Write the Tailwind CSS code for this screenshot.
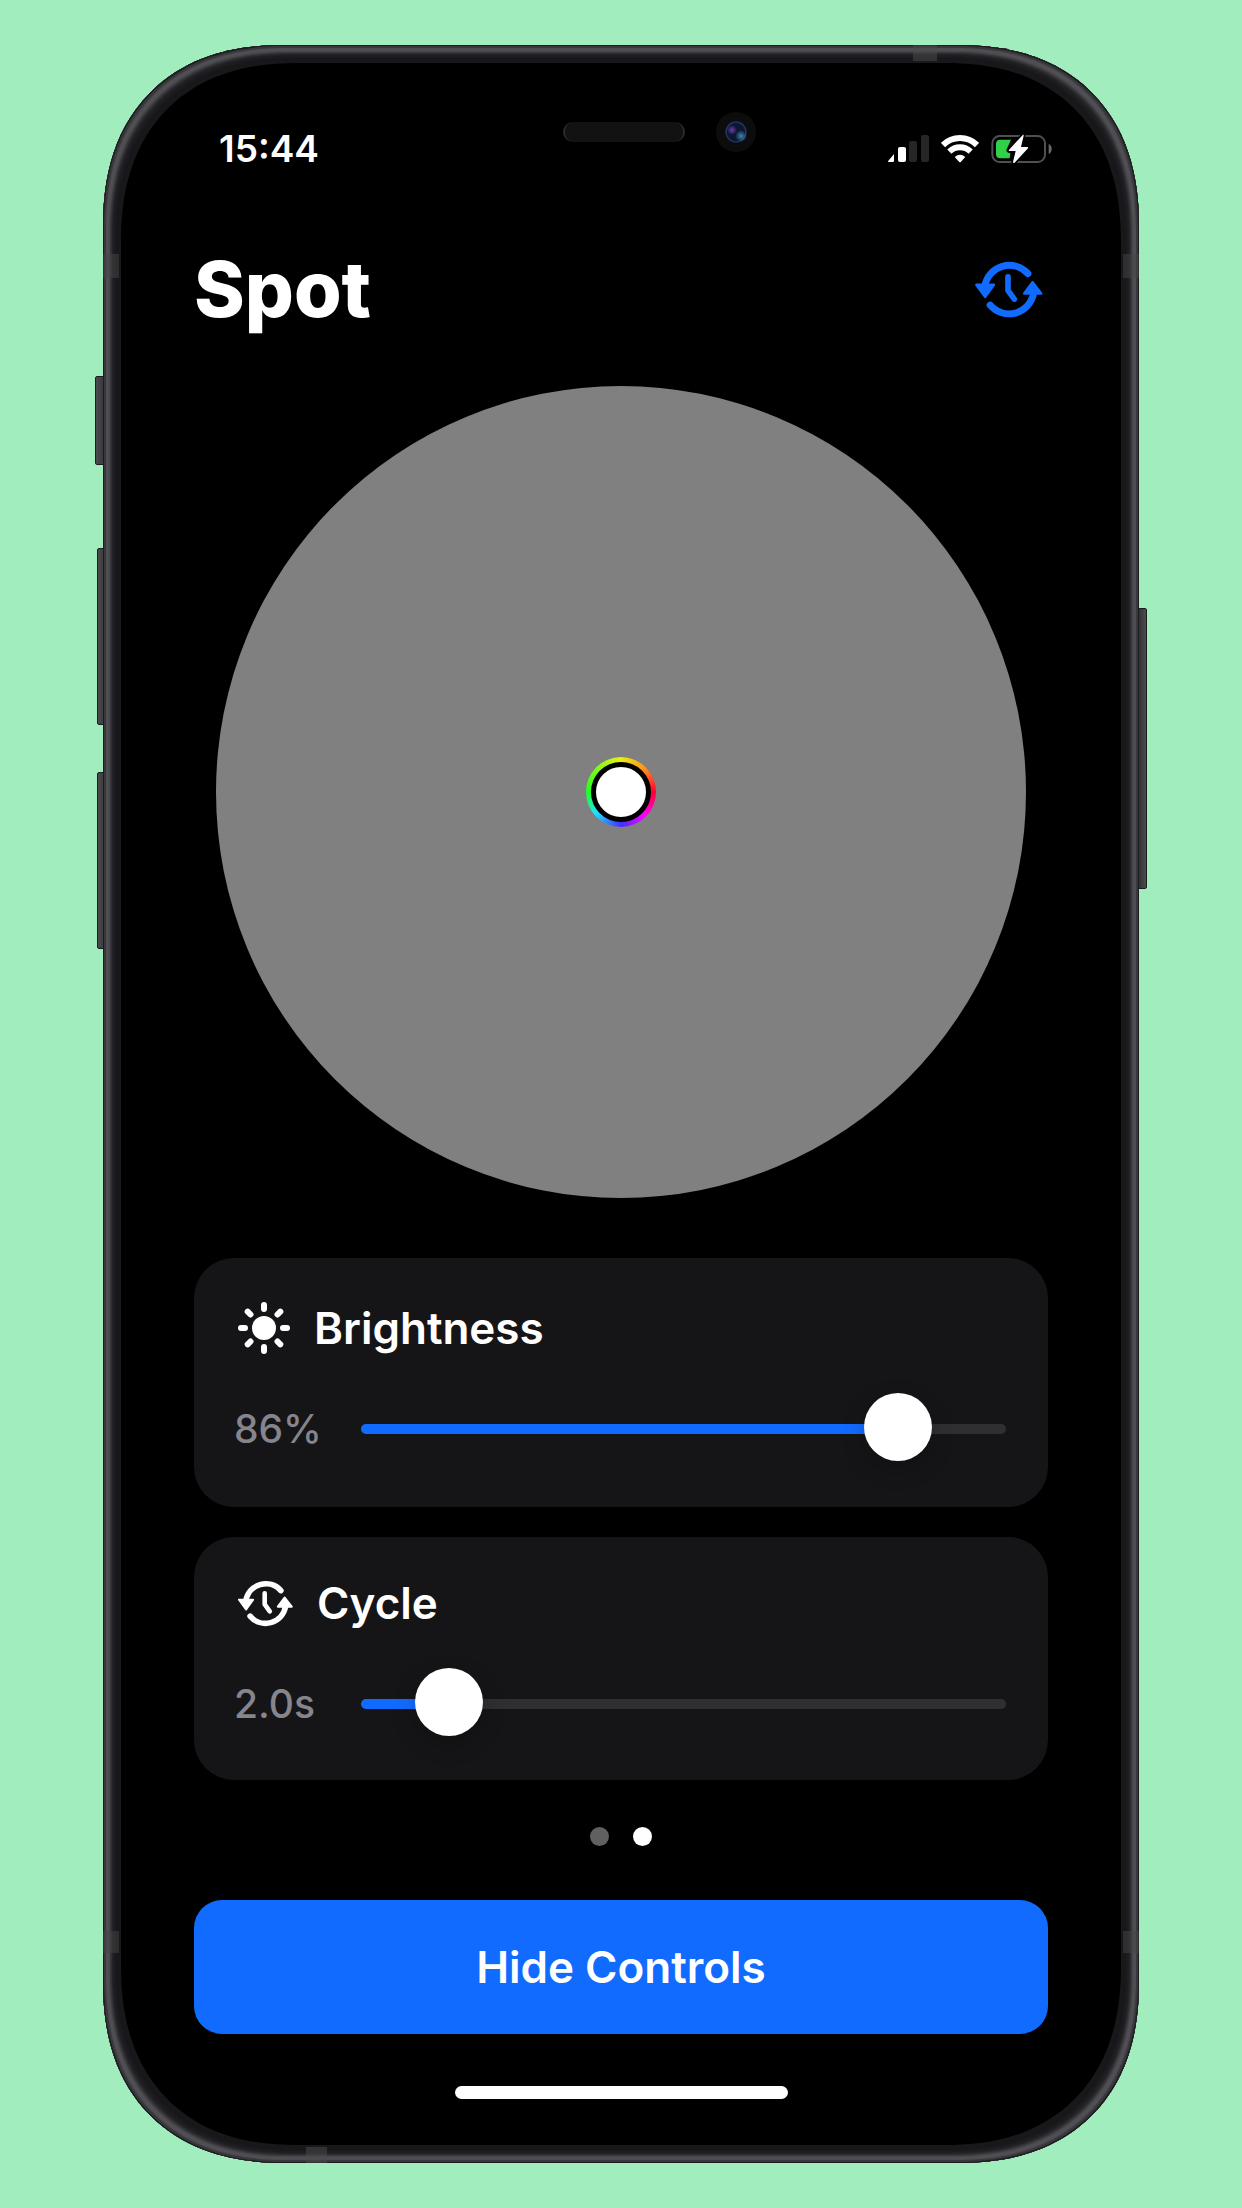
<!DOCTYPE html>
<html lang="en">
<head>
<meta charset="utf-8">
<meta name="viewport" content="width=device-width, initial-scale=1">
<title>Spot</title>
<script src="https://cdn.jsdelivr.net/npm/@tailwindcss/browser@4"></script>
</head>
<body class="min-h-screen bg-[#a2edbd] px-[103px] py-[45px] font-['Inter',sans-serif] text-white">

<svg class="hidden" aria-hidden="true">
  <symbol id="cycle" viewBox="404 512 204 172">
    <g fill="none" stroke="currentColor" stroke-linecap="round" stroke-linejoin="round">
      <path stroke-width="21" d="M563 550A75 75 0 0 0 433 588"/>
      <path stroke-width="21" d="M449 645A75 75 0 0 0 580 610"/>
      <path stroke-width="17" d="M503 560V601L522 627"/>
    </g>
    <g fill="currentColor" stroke="currentColor" stroke-width="8" stroke-linejoin="round">
      <path d="M408 584H460L434 620Z"/>
      <path d="M552 610H603L577 576Z"/>
    </g>
  </symbol>
</svg>

<div class="relative">
  <!-- side buttons -->
  <div class="absolute -left-2 top-[331px] h-[89px] w-3 rounded-xs border border-[#1c1c1f] bg-linear-to-r from-[#4a4a4f] to-[#333338]"></div>
  <div class="absolute -left-1.5 top-[503px] h-[177px] w-3 rounded-xs border border-[#1c1c1f] bg-linear-to-r from-[#4a4a4f] to-[#333338]"></div>
  <div class="absolute -left-1.5 top-[727px] h-[177px] w-3 rounded-xs border border-[#1c1c1f] bg-linear-to-r from-[#4a4a4f] to-[#333338]"></div>
  <div class="absolute -right-2 top-[563px] h-[281px] w-3 rounded-xs border border-[#1c1c1f] bg-linear-to-r from-[#28282b] to-[#4d4d50]"></div>

  <main class="relative overflow-hidden rounded-[182px] bg-black pt-20 pb-16 shadow-[inset_0_0_0_1px_#1c1c1e,inset_0_0_1px_3px_#38373b,inset_0_0_2px_7px_#504f54,inset_0_0_2px_9px_#343337,inset_0_0_3px_12px_#212024,inset_0_0_0_18px_#18181b] [corner-shape:superellipse(1.2)]">
    <!-- antenna bands -->
    <div class="absolute left-0 top-[209px] h-6 w-4 bg-[#454343]/50"></div>
    <div class="absolute right-0 top-[209px] h-6 w-4 bg-[#454343]/50"></div>
    <div class="absolute left-0 bottom-[210px] h-[22px] w-4 bg-[#454343]/50"></div>
    <div class="absolute right-0 bottom-[210px] h-[22px] w-4 bg-[#454343]/50"></div>
    <div class="absolute bottom-0 left-[203px] h-4 w-[21px] bg-[#4c4a4b]/50"></div>
    <div class="absolute top-0 right-[202px] h-4 w-6 bg-[#4c4a4b]/50"></div>

    <!-- speaker and camera -->
    <div class="absolute left-1/2 top-[67px] -ml-[58px] flex items-center gap-[31px]">
      <div class="h-5 w-[122px] rounded-full border-x-2 border-[#2b2b2b] bg-[#121212]"></div>
      <svg class="size-10" viewBox="0 0 40 40" aria-hidden="true">
        <defs>
          <radialGradient id="violet"><stop offset="0" stop-color="#6b3fa8"/><stop offset="1" stop-color="#6b3fa8" stop-opacity="0"/></radialGradient>
          <radialGradient id="teal"><stop offset="0" stop-color="#3f86ad"/><stop offset="1" stop-color="#3f86ad" stop-opacity="0"/></radialGradient>
        </defs>
        <circle cx="20" cy="20" r="20" fill="#0c0c0c"/>
        <circle cx="20" cy="20" r="10" fill="#0c1630" stroke="#1e3560" stroke-width="1.5"/>
        <circle cx="16" cy="18" r="5" fill="url(#violet)"/>
        <circle cx="25" cy="24" r="6" fill="url(#teal)"/>
      </svg>
    </div>

    <div class="flex h-12 items-center justify-between pr-[87px] pl-[116px]">
      <time class="text-[37px] font-semibold">15:44</time>
      <div class="flex items-center gap-3">
        <svg class="h-7 w-[41px]" viewBox="0 0 41 28" aria-label="Signal">
          <path fill="#fff" d="M0 27Q0 26 1 25L6 19V26Q6 27 5 27Z"/>
          <rect x="10" y="12" width="8" height="15" rx="2" fill="#fff"/>
          <rect x="21" y="6" width="8" height="21" rx="2" fill="#262626"/>
          <rect x="33" y="0" width="8" height="27" rx="2" fill="#262626"/>
        </svg>
        <svg class="h-7 w-[38px]" viewBox="0 0 114 84" aria-label="Wi-Fi">
          <g fill="none" stroke="#fff" stroke-width="18">
            <path d="M6 30A73 73 0 0 1 108 30"/>
            <path d="M25 50A46 46 0 0 1 89 50"/>
          </g>
          <path fill="#fff" d="M41 66Q57 52 73 66L59 81Q57 83 55 81Z"/>
        </svg>
        <svg class="h-[30px] w-[61px]" viewBox="0 0 183 90" aria-label="Battery charging">
          <rect x="4" y="6" width="158" height="78" rx="22" fill="none" stroke="#505052" stroke-width="6"/>
          <path fill="#69696b" d="M173 30Q182 34 182 45T173 60Z"/>
          <path fill="#30d048" d="M28 17H60L46 48Q46 56 58 58L56 73H28Q15 73 15 60V30Q15 17 28 17Z"/>
          <path fill="#fff" stroke="#000" stroke-width="10" stroke-linejoin="round" paint-order="stroke" d="M96 2L54 47Q52 51 56 51H74L66 84Q67 89 71 86L111 43Q113 39 109 39H90L98 5Q98 1 96 2Z"/>
        </svg>
      </div>
    </div>

    <div class="px-[91px]">
      <header class="mt-[68px] flex h-24 items-center justify-between pr-[5px]">
        <h1 class="text-[77px] leading-24 font-extrabold">Spot</h1>
        <button type="button" aria-label="Cycle colors" class="text-[#126bff]"><svg class="h-[57px] w-[68px]"><use href="#cycle"/></svg></button>
      </header>

      <div class="mx-[22px] mt-[49px] flex aspect-[405/406] items-center justify-center rounded-[50%] bg-[#808080]">
        <button type="button" aria-label="Color picker" class="size-[70px] rounded-full bg-[conic-gradient(from_90deg,#ff0030,#ff00ff_45deg,#4030ff_90deg,#20e0ff_140deg,#20ff20_180deg,#e8f010_270deg,#ff9020_315deg,#ff0030_360deg)] p-[5px]">
          <span class="block size-[60px] rounded-full border-5 border-black bg-white"></span>
        </button>
      </div>

      <section class="mt-[60px] rounded-[40px] bg-[#151517] px-[42px] pt-10 pb-11">
        <div class="flex h-[60px] items-center gap-6 pl-0.5">
          <svg class="size-[52px]" viewBox="0 0 52 52" aria-hidden="true">
            <circle cx="26" cy="26" r="12" fill="#fff"/>
            <path stroke="#fff" stroke-width="6" stroke-linecap="round" d="M26 3V7M26 45V49M3 26H7M45 26H49M9.700 9.700L12.500 12.500M39.500 39.500L42.300 42.300M42.300 9.700L39.500 12.500M12.500 39.500L9.700 42.300"/>
          </svg>
          <label for="brightness" class="text-[44px] leading-[60px] font-semibold">Brightness</label>
        </div>
        <div class="mt-[37px] -ml-0.5 flex h-[68px] items-center">
          <output for="brightness" class="w-[127px] shrink-0 text-[39px] font-medium text-[#86858d]">86%</output>
          <input id="brightness" type="range" min="0" max="100" step="0.1" value="87.1" style="--fill:87%" class="h-[68px] min-w-0 flex-1 appearance-none bg-transparent [&::-webkit-slider-runnable-track]:h-2.5 [&::-webkit-slider-runnable-track]:rounded-full [&::-webkit-slider-runnable-track]:bg-[linear-gradient(to_right,#126bff_var(--fill),#2f2f33_var(--fill))] [&::-webkit-slider-thumb]:-mt-[31px] [&::-webkit-slider-thumb]:size-[68px] [&::-webkit-slider-thumb]:appearance-none [&::-webkit-slider-thumb]:rounded-full [&::-webkit-slider-thumb]:bg-white [&::-webkit-slider-thumb]:shadow-[0_8px_24px_#0003]">
        </div>
      </section>

      <section class="mt-[30px] rounded-[40px] bg-[#151517] px-[42px] pt-9 pb-[42px]">
        <div class="flex h-[60px] items-center gap-6 pl-0.5">
          <svg class="h-[47px] w-[55px]" aria-hidden="true"><use href="#cycle"/></svg>
          <label for="cycle-time" class="text-[44px] leading-[60px] font-semibold">Cycle</label>
        </div>
        <div class="mt-[37px] -ml-0.5 flex h-[68px] items-center">
          <output for="cycle-time" class="w-[127px] shrink-0 text-[39px] font-medium text-[#86858d]">2.0s</output>
          <input id="cycle-time" type="range" min="0.5" max="16.5" step="0.1" value="2" style="--fill:13%" class="h-[68px] min-w-0 flex-1 appearance-none bg-transparent [&::-webkit-slider-runnable-track]:h-2.5 [&::-webkit-slider-runnable-track]:rounded-full [&::-webkit-slider-runnable-track]:bg-[linear-gradient(to_right,#126bff_var(--fill),#2f2f33_var(--fill))] [&::-webkit-slider-thumb]:-mt-[31px] [&::-webkit-slider-thumb]:size-[68px] [&::-webkit-slider-thumb]:appearance-none [&::-webkit-slider-thumb]:rounded-full [&::-webkit-slider-thumb]:bg-white [&::-webkit-slider-thumb]:shadow-[0_8px_24px_#0003]">
        </div>
      </section>

      <nav aria-label="Pages" class="mt-[47px] flex justify-center gap-6">
        <button type="button" aria-label="Page 1" class="size-[19px] rounded-full bg-[#606060]"></button>
        <button type="button" aria-label="Page 2" aria-current="page" class="size-[19px] rounded-full bg-white"></button>
      </nav>

      <button type="button" class="mt-[54px] block h-[134px] w-full rounded-[28px] bg-[#126bff] text-[44px] font-semibold">Hide Controls</button>
      <div class="mx-auto mt-[52px] h-[13px] w-[333px] rounded-full bg-white"></div>
    </div>
  </main>
</div>
</body>
</html>
